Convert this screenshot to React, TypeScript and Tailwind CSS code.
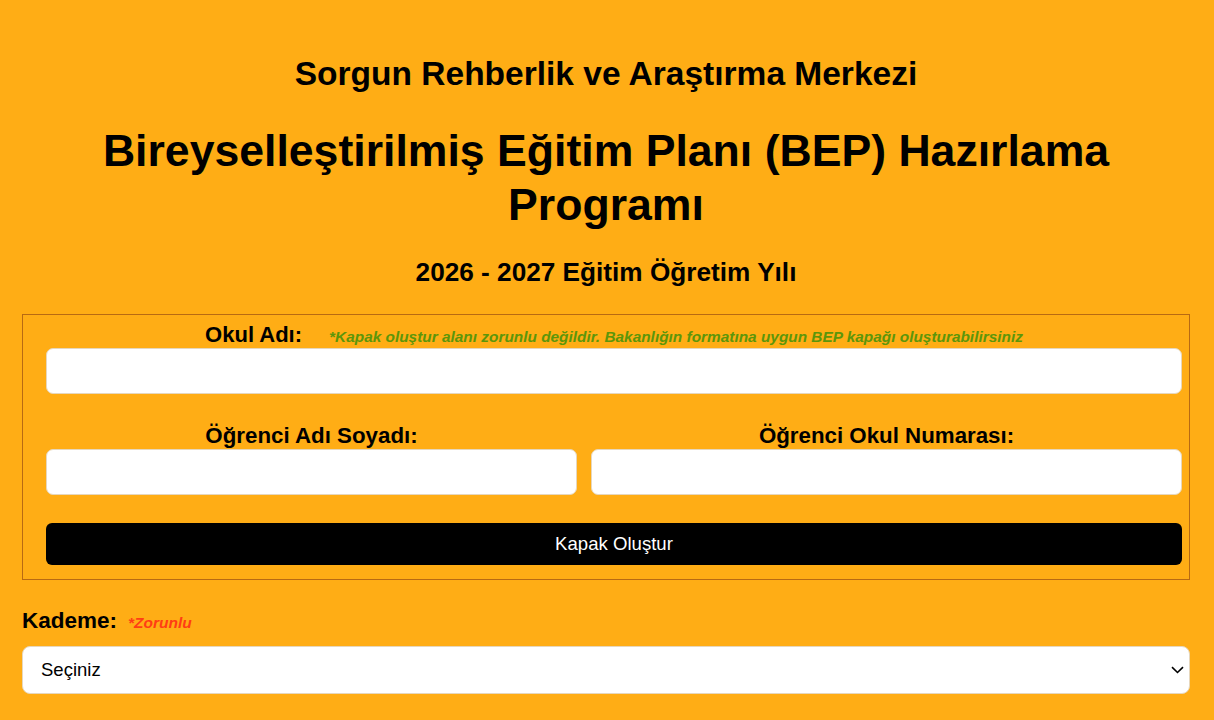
import React from "react";

export default function App() {
  return (
    <div
      className="min-h-[720px] w-full bg-[#ffad15] text-black pl-[22px] pr-[24px] pt-[54px] pb-[26px]"
      style={{ fontFamily: '"Liberation Sans", Arial, sans-serif' }}
    >
      <h3 className="text-center font-bold text-[33.5px] leading-[40px]">
        Sorgun Rehberlik ve Araştırma Merkezi
      </h3>
      <h1 className="mt-[30px] text-center font-bold text-[44.6px] leading-[54px] px-[60px]">
        Bireyselleştirilmiş Eğitim Planı (BEP) Hazırlama Programı
      </h1>
      <h2 className="mt-[24px] text-center font-bold text-[26.2px] leading-[32px]">
        2026 - 2027 Eğitim Öğretim Yılı
      </h2>

      <div className="mt-[26px] border border-[#b86a12] pl-[23px] pr-[7px] pt-[7px] pb-[14px]">
        <div className="text-center h-[26px] leading-[26px] whitespace-nowrap">
          <span className="font-bold text-[22px]">Okul Adı:</span>
          <span className="ml-[27px] text-[15.4px] font-bold italic text-[#5c960a]">
            *Kapak oluştur alanı zorunlu değildir. Bakanlığın formatına uygun BEP kapağı oluşturabilirsiniz
          </span>
        </div>
        <input
          type="text"
          className="block w-full h-[46px] bg-white rounded-[7px] border border-[#e6d7bd] outline-none px-3 text-[18px]"
        />

        <div className="mt-[29px] flex gap-[14px]">
          <div className="w-[531px] flex flex-col">
            <label className="text-center font-bold text-[22.3px] h-[26px] leading-[26px]">Öğrenci Adı Soyadı:</label>
            <input
              type="text"
              className="block w-full h-[46px] bg-white rounded-[7px] border border-[#e6d7bd] outline-none px-3 text-[18px]"
            />
          </div>
          <div className="flex-1 flex flex-col">
            <label className="text-center font-bold text-[22.3px] h-[26px] leading-[26px]">Öğrenci Okul Numarası:</label>
            <input
              type="text"
              className="block w-full h-[46px] bg-white rounded-[7px] border border-[#e6d7bd] outline-none px-3 text-[18px]"
            />
          </div>
        </div>

        <button
          type="button"
          className="mt-[28px] block w-full h-[42px] bg-black text-white rounded-[6px] text-[18.6px]"
        >
          Kapak Oluştur
        </button>
      </div>

      <div className="mt-[28px] h-[26px] leading-[26px] whitespace-nowrap">
        <span className="font-bold text-[22.5px]">Kademe:</span>
        <span className="ml-[11px] text-[15.5px] font-bold italic text-[#ff3d14]">*Zorunlu</span>
      </div>
      <div className="mt-[12px] h-[48px] bg-white rounded-[8px] border border-[#e6d7bd] flex items-center pl-[18px] pr-[5px] text-[18.5px]">
        <span className="flex-1">Seçiniz</span>
        <svg width="13" height="8" viewBox="0 0 13 8" fill="none">
          <path d="M1 1.2 L6.5 6.5 L12 1.2" stroke="#000" strokeWidth="1.6" />
        </svg>
      </div>
    </div>
  );
}
